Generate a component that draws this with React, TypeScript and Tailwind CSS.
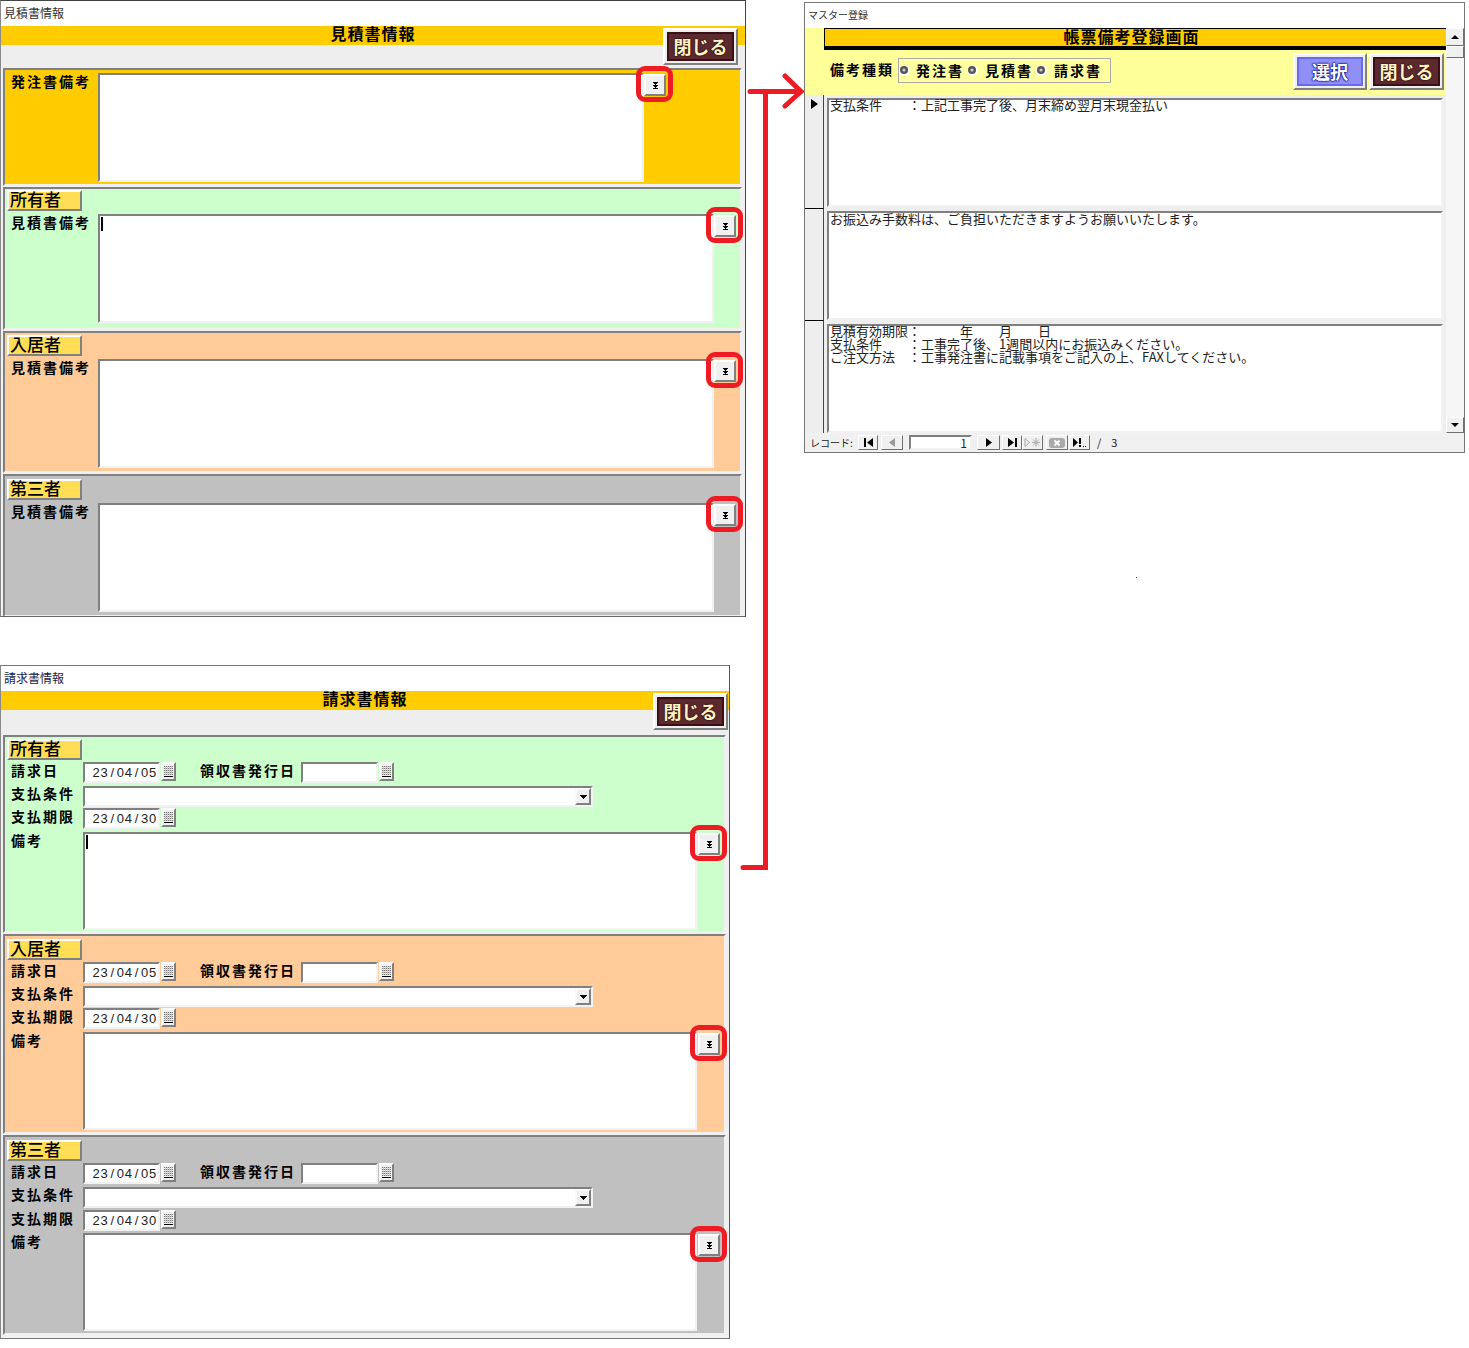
import React from "react";

const LBL = "font-['Noto_Sans_CJK_JP',sans-serif] font-bold text-[14px] leading-[18px] tracking-[2px] text-black whitespace-pre";
const INSET = "border-2 border-t-[#808080] border-l-[#808080] border-r-[#f2f2f2] border-b-[#f2f2f2] bg-white";
const RAISED = "border-2 border-t-white border-l-white border-r-[#808080] border-b-[#808080]";
const RAISED1 = "border border-t-white border-l-white border-r-[#707070] border-b-[#707070]";
const MEMO_TEXT = "whitespace-pre font-['Noto_Sans_CJK_JP',sans-serif] text-[13px] leading-[13px] text-[#222]";

function DoubleArrow() {
  return (
    <svg width="5" height="7" viewBox="0 0 5 7" shapeRendering="crispEdges">
      <path d="M0 0h5v1H4v1H3v1H2V2H1V1H0zM0 3h5v1H4v1H3v1H2V5H1V4H0zM0 6h5v1H0z" fill="#000" />
    </svg>
  );
}

function RingButton({ shift = 0 }: { shift?: number }) {
  return (
    <div className="absolute left-full top-px w-[22px] h-[22px]" style={{ marginLeft: shift }}>
      <div className={`w-full h-full bg-[#f0f0f0] flex items-center justify-center ${RAISED}`}>
        <DoubleArrow />
      </div>
      <div className="absolute -left-[8px] -top-[8px] w-[37px] h-[36px] rounded-[9px] border-[5px] border-[#ed1c24]" />
    </div>
  );
}

function Memo({ w, h, cursor, shift }: { w: number; h: number; cursor?: boolean; shift?: number }) {
  return (
    <div className="relative shrink-0" style={{ width: w, height: h }}>
      <div className={`w-full h-full ${INSET}`}>
        {cursor && <div className="w-[2px] h-[14px] bg-black ml-px mt-px" />}
      </div>
      <RingButton shift={shift} />
    </div>
  );
}

function Who({ text }: { text: string }) {
  return (
    <div className={`w-[75px] h-[21px] bg-[#ffdd55] flex items-center pl-px pb-[4px] font-['Noto_Sans_CJK_JP',sans-serif] font-medium text-[17px] leading-none text-black ${RAISED}`}>
      {text}
    </div>
  );
}

function BrownFace({ text }: { text: string }) {
  return (
    <div className="w-full h-full bg-[#5c2a2e] border-2 border-[#3a1014] flex items-center justify-center pb-[2px] font-['Noto_Sans_CJK_JP',sans-serif] font-bold text-[18px] leading-none text-[#fff3c4] [text-shadow:0_0_2px_#200,0_0_1px_#200]">
      {text}
    </div>
  );
}

function Closer() {
  return (
    <div className={`shrink-0 w-[75px] h-[37px] bg-[#eeeeee] p-[2px] ${RAISED}`}>
      <BrownFace text="閉じる" />
    </div>
  );
}

function Est({ bg, who, h, memoW, cursor, labelTop = 0, top }: { bg: string; who?: string; h: number; memoW: number; cursor?: boolean; labelTop?: number; top: number }) {
  return (
    <div className={`mx-[3px] w-[739px] border-2 border-t-[#808080] border-l-[#808080] border-r-[#f0f0f0] border-b-[#f0f0f0] ${bg}`} style={{ height: h }}>
      {who && (
        <div className="ml-[2px]" style={{ marginTop: labelTop }}>
          <Who text={who} />
        </div>
      )}
      <div className="flex pl-[6px]" style={{ marginTop: top }}>
        <div className={`w-[87px] -mt-px ${LBL}`}>{who ? "見積書備考" : "発注書備考"}</div>
        <Memo w={memoW} h={109} cursor={cursor} />
      </div>
    </div>
  );
}

function DateBox({ value, w }: { value?: string; w: number }) {
  return (
    <div className="flex items-start">
      <div className={`h-[21px] flex items-center pl-[7px] font-['Liberation_Sans',sans-serif] text-[13px] leading-none text-[#222] ${INSET}`} style={{ width: w }}>
        {value &&
          value.split("").map((c, i) => (
            <span key={i} className="w-[8.100px] text-center shrink-0">
              {c}
            </span>
          ))}
      </div>
      <div className="ml-px w-[15px] h-[19px] bg-[#f0f0f0] flex items-center justify-center border-2 border-t-[#fafafa] border-l-[#fafafa] border-r-[#808080] border-b-[#808080]">
        <svg width="9" height="11" viewBox="0 0 9 11" shapeRendering="crispEdges">
          <path d="M0 0h9v1H0zM0 2h9v1H0zM0 4h9v1H0zM0 6h9v1H0zM0 8h9v1H0z" fill="#777" />
          <path d="M1 0v9M3 0v9M5 0v9M7 0v9" stroke="#ccc" strokeWidth="1" />
          <path d="M0 10h9v1H0z" fill="#000" />
        </svg>
      </div>
    </div>
  );
}

function Inv({ bg, who, h, cursor, labelTop, g3, g4 }: { bg: string; who: string; h: number; cursor?: boolean; labelTop: number; g3: number; g4: number }) {
  return (
    <div className={`mx-[3px] w-[723px] border-2 border-t-[#808080] border-l-[#808080] border-r-[#f0f0f0] border-b-[#f0f0f0] ${bg}`} style={{ height: h }}>
      <div className="ml-[2px]" style={{ marginTop: labelTop }}>
        <Who text={who} />
      </div>
      <div className="flex items-start h-[22px] mt-[2px] pl-[6px]">
        <div className={`w-[72px] -mt-px ${LBL}`}>請求日</div>
        <DateBox value="23/04/05" w={77} />
        <div className={`ml-[24px] w-[101px] -mt-px ${LBL}`}>領収書発行日</div>
        <DateBox w={77} />
      </div>
      <div className="flex items-start h-[21px] mt-[2px] pl-[6px]">
        <div className={`w-[72px] -mt-[2px] ${LBL}`}>支払条件</div>
        <div className={`w-[510px] h-[21px] flex justify-end ${INSET}`}>
          <div className="w-[16px] h-[17px] bg-[#f0f0f0] flex items-center justify-center border-2 border-t-[#fafafa] border-l-[#fafafa] border-r-[#808080] border-b-[#808080]">
            <svg width="7" height="4" viewBox="0 0 7 4" shapeRendering="crispEdges">
              <path d="M0 0h7v1H6v1H5v1H4v1H3V3H2V2H1V1H0z" fill="#000" />
            </svg>
          </div>
        </div>
      </div>
      <div className="flex items-start h-[21px] pl-[6px]" style={{ marginTop: g3 }}>
        <div className={`w-[72px] -mt-px ${LBL}`}>支払期限</div>
        <DateBox value="23/04/30" w={77} />
      </div>
      <div className="flex pl-[6px]" style={{ marginTop: g4 }}>
        <div className={`w-[72px] -mt-px ${LBL}`}>備考</div>
        <Memo w={614} h={98} cursor={cursor} shift={1} />
      </div>
    </div>
  );
}

function WinTitle({ text, size = "text-[12px]", color = "text-[#333]" }: { text: string; size?: string; color?: string }) {
  return (
    <div className={`h-[25px] flex items-center pl-[3px] pb-[2px] bg-white font-['Noto_Sans_CJK_JP',sans-serif] leading-none ${size} ${color}`}>
      {text}
    </div>
  );
}

function Head({ title, gray }: { title: string; gray: number }) {
  return (
    <>
      <div className="h-[19px] bg-[#ffcc00] flex items-center justify-center pb-[6px] font-['Noto_Sans_CJK_JP',sans-serif] font-bold text-[16px] leading-none tracking-[1px] text-black">
        {title}
      </div>
      <div className="bg-[#eeeeee]" style={{ height: gray }} />
    </>
  );
}

function Selector({ active, line }: { active?: boolean; line?: boolean }) {
  return (
    <div className={`w-[19px] shrink-0 bg-[#eeeeee] border-r border-r-[#444] flex justify-center pt-[4px] ${line ? "border-b border-b-black" : ""}`}>
      {active && (
        <svg width="7" height="10" viewBox="0 0 7 10">
          <path d="M0 0L7 5L0 10z" fill="#000" />
        </svg>
      )}
    </div>
  );
}

function Record({ lines, active, h, top, line, lift }: { lines: string[]; active?: boolean; h: number; top: number; line?: boolean; lift: string }) {
  return (
    <div className="flex" style={{ height: h }}>
      <Selector active={active} line={line} />
      <div className="flex-1 bg-[#eeeeee] px-[3px]" style={{ paddingTop: top }}>
        <div className={`h-[109px] pl-px ${INSET} ${MEMO_TEXT}`}>
          <div className={lift}>
            {lines.map((l) => (
              <div key={l}>{l}</div>
            ))}
          </div>
        </div>
      </div>
    </div>
  );
}

function NavBtn({ children, w, ml = 0 }: { children: React.ReactNode; w: number; ml?: number }) {
  return (
    <div className={`h-[15px] shrink-0 bg-[#f0f0f0] flex items-center justify-center ${RAISED1}`} style={{ width: w, marginLeft: ml }}>
      {children}
    </div>
  );
}

function BlueBtn() {
  return (
    <div className={`w-[74px] h-[37px] bg-[#eeeeee] p-[2px] ${RAISED}`}>
      <div className="w-full h-full bg-[#8f8ff5] border-2 border-[#6a6af0] flex items-center justify-center pb-[2px] font-['Noto_Sans_CJK_JP',sans-serif] font-bold text-[18px] leading-none text-white [text-shadow:0_0_2px_#000080,0_0_2px_#000080,0_0_1px_#000080]">
        選択
      </div>
    </div>
  );
}

function Radio() {
  return (
    <svg className="shrink-0" width="11" height="11" viewBox="0 0 11 11">
      <circle cx="5.500" cy="5.500" r="5.500" fill="#fff" />
      <circle cx="5" cy="5" r="4" fill="#555" />
      <circle cx="5" cy="5" r="1.600" fill="#ccc" />
    </svg>
  );
}

export default function App() {
  return (
    <div className="relative w-[1469px] h-[1348px] bg-white overflow-hidden">
      {/* Estimate window */}
      <div className="absolute left-0 top-0 w-[746px] h-[617px] border-t border-t-[#444] border-r border-r-[#444] border-l border-l-[#8a8a8a] border-b border-b-[#666] bg-[#f0f0f0] overflow-hidden box-border">
        <WinTitle text="見積書情報" />
        <Head title="見積書情報" gray={23} />
        <div className="-ml-px flex flex-col gap-px">
          <Est bg="bg-[#ffcc00]" h={118} memoW={546} top={3} />
          <Est bg="bg-[#ccffcc]" who="所有者" h={143} memoW={616} cursor labelTop={1} top={3} />
          <Est bg="bg-[#ffcc99]" who="入居者" h={142} memoW={616} labelTop={2} top={3} />
          <Est bg="bg-[#c0c0c0]" who="第三者" h={143} memoW={616} labelTop={3} top={3} />
        </div>
        <div className="absolute left-[662px] top-[27px]">
          <Closer />
        </div>
      </div>

      {/* Invoice window */}
      <div className="absolute left-0 top-[665px] w-[730px] h-[674px] border-t border-t-[#777] border-r border-r-[#555] border-l border-l-[#8a8a8a] border-b border-b-[#777] bg-[#f0f0f0] overflow-hidden box-border">
        <WinTitle text="請求書情報" color="text-[#224]" />
        <Head title="請求書情報" gray={25} />
        <div className="-ml-px flex flex-col gap-px">
          <Inv bg="bg-[#ccffcc]" who="所有者" h={198} cursor labelTop={2} g3={1} g4={3} />
          <Inv bg="bg-[#ffcc99]" who="入居者" h={200} labelTop={3} g3={1} g4={3} />
          <Inv bg="bg-[#c0c0c0]" who="第三者" h={200} labelTop={3} g3={2} g4={2} />
        </div>
        <div className="absolute left-[652px] top-[27px]">
          <Closer />
        </div>
      </div>

      {/* Master window */}
      <div className="absolute left-[804px] top-[2px] w-[661px] h-[451px] border border-[#777] bg-white flex flex-col box-border">
        <WinTitle text="マスター登録" size="text-[10px]" />
        <div className="flex flex-1 min-h-0">
          <div className="w-[641px] flex flex-col">
            <div className="h-[67px] shrink-0 bg-[#ffff99] flex flex-col">
              <div className="ml-[19px] h-[22px] bg-[#ffcc00] border-t border-l border-black border-b-[4px] flex items-center justify-center pr-[8px] pb-[3px] font-['Noto_Sans_CJK_JP',sans-serif] font-bold text-[16px] leading-none tracking-[1px] text-black">
                帳票備考登録画面
              </div>
              <div className="flex items-center pl-[25px] pr-[2px] mt-[3px] h-[37px]">
                <div className={`w-[68px] pb-[5px] ${LBL}`}>備考種類</div>
                <div className="w-[213px] h-[25px] -mt-[2px] border border-[#aaa] bg-[#ffffa0] flex items-center">
                  <Radio />
                  <span className={`ml-[6px] w-[51px] pb-[2px] ${LBL}`}>発注書</span>
                  <Radio />
                  <span className={`ml-[7px] w-[51px] pb-[2px] ${LBL}`}>見積書</span>
                  <Radio />
                  <span className={`ml-[7px] pb-[2px] ${LBL}`}>請求書</span>
                </div>
                <div className="ml-auto flex gap-[2px]">
                  <BlueBtn />
                  <Closer />
                </div>
              </div>
            </div>
            <div className="flex-1 bg-[#eeeeee]">
              <Record active h={114} top={3} line lift="-mt-[2px]" lines={["支払条件　　：上記工事完了後、月末締め翌月末現金払い"]} />
              <Record h={112} top={2} line lift="-mt-px" lines={["お振込み手数料は、ご負担いただきますようお願いいたします。"]} />
              <Record
                h={112}
                top={3}
                lift="-mt-[2px]"
                lines={[
                  "見積有効期限：　　　年　　月　　日",
                  "支払条件　　：工事完了後、1週間以内にお振込みください。",
                  "ご注文方法　：工事発注書に記載事項をご記入の上、FAXしてください。",
                ]}
              />
            </div>
          </div>
          <div className="w-[18px] bg-[#f6f6f6] flex flex-col justify-between">
            <div>
              <div className={`h-[18px] bg-[#f0f0f0] flex items-center justify-center ${RAISED1}`}>
                <svg width="8" height="4" viewBox="0 0 8 4"><path d="M4 0L8 4H0z" fill="#000" /></svg>
              </div>
              <div className={`h-[12px] bg-[#f0f0f0] ${RAISED1}`} />
            </div>
            <div className={`h-[16px] bg-[#f0f0f0] flex items-center justify-center ${RAISED1}`}>
              <svg width="8" height="4" viewBox="0 0 8 4"><path d="M0 0H8L4 4z" fill="#000" /></svg>
            </div>
          </div>
        </div>
        <div className="h-[19px] shrink-0 bg-[#f0f0f0] flex items-center pl-[5px] font-['Noto_Sans_CJK_JP',sans-serif] text-[10px] leading-none text-[#222]">
          <span className="w-[48px]">レコード:</span>
          <NavBtn w={20}><svg width="9" height="9" viewBox="0 0 9 9"><path d="M0 0h2v9H0zM9 0v9L3 4.500z" /></svg></NavBtn>
          <NavBtn w={22} ml={3}><svg width="6" height="9" viewBox="0 0 6 9"><path d="M6 0v9L0 4.500z" fill="#999" /></svg></NavBtn>
          <div className={`ml-[6px] w-[63px] h-[15px] flex items-center justify-end pr-[3px] text-[12px] ${INSET}`}>1</div>
          <NavBtn w={23} ml={5}><svg width="6" height="9" viewBox="0 0 6 9"><path d="M0 0v9L6 4.500z" /></svg></NavBtn>
          <NavBtn w={20} ml={2}><svg width="9" height="9" viewBox="0 0 9 9"><path d="M0 0v9L6 4.500zM7 0h2v9H7z" /></svg></NavBtn>
          <NavBtn w={21}>
            <svg width="17" height="9" viewBox="0 0 17 9" stroke="#aaa" fill="none">
              <path d="M1 .5v8L5.500 4.500z" />
              <path d="M12 0v9M8 4.500h8M9 1.500l6 6M15 1.500l-6 6" />
            </svg>
          </NavBtn>
          <NavBtn w={22} ml={3}>
            <svg width="16" height="10" viewBox="0 0 16 10">
              <rect width="16" height="10" rx="3" fill="#aaa" />
              <path d="M5.500 2.500l5 5M10.500 2.500l-5 5" stroke="#fff" strokeWidth="2" />
            </svg>
          </NavBtn>
          <NavBtn w={21} ml={1}>
            <svg width="14" height="9" viewBox="0 0 14 9">
              <path d="M0 0v9L5 4.500zM6 0h2v6H6zM6 7h2v2H6zM10 8h1v1h-1zM12 8h1v1h-1z" />
            </svg>
          </NavBtn>
          <span className="ml-[7px] text-[11px]">/</span>
          <span className="ml-[10px] text-[11px]">3</span>
        </div>
      </div>

      {/* Connector */}
      <svg className="absolute left-0 top-0 pointer-events-none" width="1469" height="1348" viewBox="0 0 1469 1348" fill="none">
        <path d="M750 91.500H801M785 76L801 91.500L785 106M765.500 91.500V867.500H743" stroke="#ed1c24" strokeWidth="5" strokeLinecap="round" strokeLinejoin="miter" />
        <rect x="1136" y="577" width="1" height="1" fill="#444" />
      </svg>
    </div>
  );
}
